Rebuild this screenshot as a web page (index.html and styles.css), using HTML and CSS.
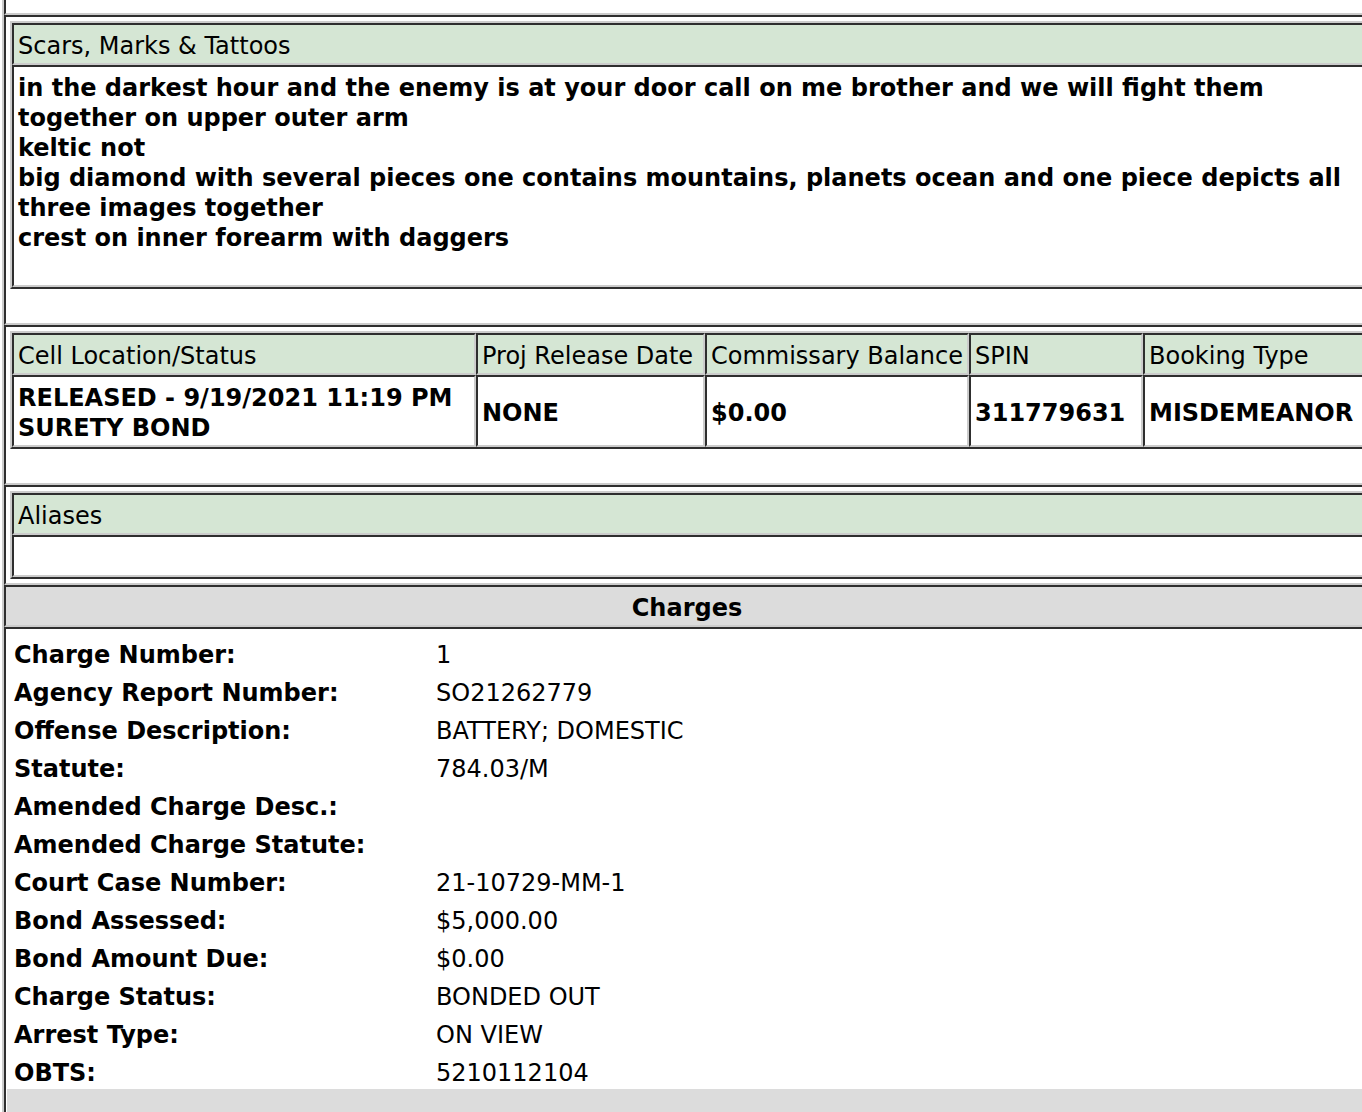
FILE: index.html
```html
<!DOCTYPE html>
<html lang="en">
<head>
  <meta charset="UTF-8" />
  <title>Inmate Details</title>
  <link rel="stylesheet" href="styles.css">
</head>
<body>

  <table class="page">
    <tr><td class="wrap stub"></td></tr>

    <tr>
      <td class="wrap">
        <table class="box">
          <tr><td class="hd">Scars, Marks &amp; Tattoos</td></tr>
          <tr>
            <td class="bd">in the darkest hour and the enemy is at your door call on me brother and we will fight them<br>together on upper outer arm<br>keltic not<br>big diamond with several pieces one contains mountains, planets ocean and one piece depicts all<br>three images together<br>crest on inner forearm with daggers<br>&nbsp;</td>
          </tr>
        </table>
        <div class="spacer"></div>
      </td>
    </tr>

    <tr>
      <td class="wrap">
        <table class="box status">
          <tr>
            <td class="hd c1">Cell Location/Status</td>
            <td class="hd c2">Proj Release Date</td>
            <td class="hd c3">Commissary Balance</td>
            <td class="hd c4">SPIN</td>
            <td class="hd">Booking Type</td>
          </tr>
          <tr class="bd">
            <td>RELEASED - 9/19/2021 11:19 PM<br>SURETY BOND</td>
            <td>NONE</td>
            <td>$0.00</td>
            <td>311779631</td>
            <td>MISDEMEANOR</td>
          </tr>
        </table>
        <div class="spacer"></div>
      </td>
    </tr>

    <tr>
      <td class="wrap">
        <table class="box">
          <tr><td class="hd">Aliases</td></tr>
          <tr><td>&nbsp;</td></tr>
        </table>
      </td>
    </tr>

    <tr><td class="wrap charges-hd">Charges</td></tr>

    <tr>
      <td class="wrap charges">
        <table class="details">
          <tr><td class="label">Charge Number:</td><td>1</td></tr>
          <tr><td class="label">Agency Report Number:</td><td>SO21262779</td></tr>
          <tr><td class="label">Offense Description:</td><td>BATTERY; DOMESTIC</td></tr>
          <tr><td class="label">Statute:</td><td>784.03/M</td></tr>
          <tr><td class="label">Amended Charge Desc.:</td><td></td></tr>
          <tr><td class="label">Amended Charge Statute:</td><td></td></tr>
          <tr><td class="label">Court Case Number:</td><td>21-10729-MM-1</td></tr>
          <tr><td class="label">Bond Assessed:</td><td>$5,000.00</td></tr>
          <tr><td class="label">Bond Amount Due:</td><td>$0.00</td></tr>
          <tr><td class="label">Charge Status:</td><td>BONDED OUT</td></tr>
          <tr><td class="label">Arrest Type:</td><td>ON VIEW</td></tr>
          <tr><td class="label">OBTS:</td><td>5210112104</td></tr>
        </table>
        <div class="sep"></div>
      </td>
    </tr>
  </table>

</body>
</html>
```

FILE: styles.css
```css
:root {
  --dark: #2e2e2e;
  --light: #cccccc;
  --green: #d5e6d4;
  --gray: #dcdcdc;
}

html, body {
  margin: 0;
  padding: 0;
  overflow: hidden;
  background: #fff;
}

body {
  font-family: "DejaVu Sans", Verdana, sans-serif;
  font-size: 24px;
  line-height: 30px;
  color: #000;
}

table {
  border-collapse: separate;
  border-spacing: 0;
  font: inherit;
}

/* outer frame */
.page {
  margin-left: 2px;
  width: 1374px;
  border-left: 2px solid var(--light);
}

.wrap {
  padding: 4px;
  border: 2px solid;
  border-color: var(--dark) var(--light) var(--light) var(--dark);
  vertical-align: top;
}

.stub {
  height: 13px;
  padding: 0;
  border-top: 0;
}

.spacer {
  height: 30px;
}

/* bordered inner tables */
.box {
  width: 100%;
  border: 2px solid;
  border-color: var(--light) var(--dark) var(--dark) var(--light);
}

.box td {
  padding: 6px 4px 2px;
  border: 2px solid;
  border-color: var(--dark) var(--light) var(--light) var(--dark);
  text-align: left;
  vertical-align: middle;
  white-space: nowrap;
}

.box td.hd {
  background: var(--green);
  font-weight: normal;
}

.bd, .bd td {
  font-weight: bold;
}

.status .c1 { width: 452px; }
.status .c2 { width: 217px; }
.status .c3 { width: 251px; }
.status .c4 { width: 162px; }

/* charges */
.wrap.charges-hd {
  padding: 6px 10px 2px 4px;
  background: var(--gray);
  font-weight: bold;
  text-align: center;
}

.wrap.charges {
  padding: 4px 1px 0;
}

.details td {
  padding: 7px 7px 1px;
  white-space: nowrap;
}

.details td.label {
  width: 408px;
  font-weight: bold;
}

.sep {
  height: 40px;
  background: var(--gray);
}
```
